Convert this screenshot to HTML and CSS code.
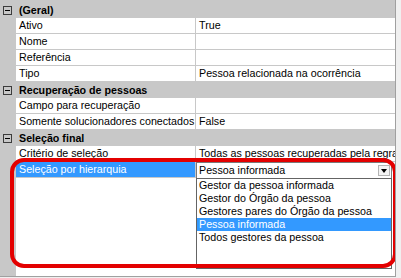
FILE: index.html
```html
<!DOCTYPE html>
<html lang="pt">
<head>
    <meta charset="UTF-8">
    <title>Propriedades</title>
    <link rel="stylesheet" href="styles.css">
</head>
<body>
    <div class="grid">
        <div class="cat"><span class="toggle"></span>(Geral)</div>
        <div class="row"><div class="margin"></div><div class="name">Ativo</div><div class="value">True</div></div>
        <div class="row"><div class="margin"></div><div class="name">Nome</div><div class="value"></div></div>
        <div class="row"><div class="margin"></div><div class="name">Referência</div><div class="value"></div></div>
        <div class="row"><div class="margin"></div><div class="name">Tipo</div><div class="value">Pessoa relacionada na ocorrência</div></div>

        <div class="cat"><span class="toggle"></span>Recuperação de pessoas</div>
        <div class="row"><div class="margin"></div><div class="name">Campo para recuperação</div><div class="value"></div></div>
        <div class="row"><div class="margin"></div><div class="name">Somente solucionadores conectados</div><div class="value">False</div></div>

        <div class="cat"><span class="toggle"></span>Seleção final</div>
        <div class="row"><div class="margin"></div><div class="name">Critério de seleção</div><div class="value">Todas as pessoas recuperadas pela regra</div></div>
        <div class="row selected">
            <div class="margin"></div>
            <div class="name">Seleção por hierarquia</div>
            <div class="value">
                <div class="edit">Pessoa informada<span class="drop-button"></span></div>
            </div>
        </div>

        <div class="filler"><div class="margin"></div><div class="empty"></div></div>

        <!-- lista aberta do combo -->
        <div class="dropdown-list">
            <div class="item">Gestor da pessoa informada</div>
            <div class="item">Gestor do Órgão da pessoa</div>
            <div class="item">Gestores pares do Órgão da pessoa</div>
            <div class="item active">Pessoa informada</div>
            <div class="item">Todos gestores da pessoa</div>
        </div>

        <!-- marcação vermelha -->
        <div class="highlight"></div>
    </div>
</body>
</html>
```

FILE: styles.css
```css
body
{
    margin: 0;
    background-color: #f0f0f0;
    font-family: "Liberation Sans", Arial, sans-serif;
    font-size: 10.7px;
    color: #000;
}

.grid
{
    position: relative;
    width: 396px;
    height: 277px;
    box-sizing: border-box;
    padding-top: 2px;
    border-right: 1px solid #a0a0a0;
    border-bottom: 1px solid #a0a0a0;
    background-color: #c8c8c8;
    display: flex;
    flex-direction: column;
    overflow: hidden;
}

.cat
{
    height: 16px;
    flex: none;
    display: flex;
    align-items: center;
    padding-left: 3px;
    font-weight: bold;
    white-space: nowrap;
}

.toggle
{
    position: relative;
    width: 9px;
    height: 9px;
    box-sizing: border-box;
    border: 1px solid #3c3c3c;
    margin-right: 7px;
}

.toggle::after
{
    content: "";
    position: absolute;
    left: 1px;
    top: 3px;
    width: 5px;
    height: 1px;
    background-color: #000;
}

.row
{
    height: 16px;
    flex: none;
    display: grid;
    grid-template-columns: 16px 180px 1fr;
    line-height: 15px;
    white-space: nowrap;
}

.name
{
    background-color: #fff;
    border-right: 1px solid #c8c8c8;
    border-bottom: 1px solid #c8c8c8;
    padding-left: 3px;
    overflow: hidden;
}

.value
{
    background-color: #fff;
    border-bottom: 1px solid #c8c8c8;
    padding-left: 3px;
    overflow: hidden;
}

.selected .name
{
    background-color: #3399ff;
    color: #fff;
}

.selected .value
{
    padding-left: 0;
    border-bottom: none;
}

.edit
{
    width: 196px;
    height: 16px;
    box-sizing: border-box;
    border: 1px solid #7a7a7a;
    border-bottom: none;
    padding-left: 2px;
    display: flex;
    align-items: center;
}

.drop-button
{
    position: relative;
    margin-left: auto;
    margin-right: 1px;
    width: 12px;
    height: 11px;
    box-sizing: border-box;
    border: 1px solid #b4b4b4;
    background-color: #f4f4f4;
}

.drop-button::after
{
    content: "";
    position: absolute;
    left: 2px;
    top: 3px;
    border-left: 3px solid transparent;
    border-right: 3px solid transparent;
    border-top: 4px solid #000;
}

.filler
{
    flex: 1;
    display: grid;
    grid-template-columns: 16px 1fr;
}

.empty
{
    background-color: #fff;
}

.dropdown-list
{
    position: absolute;
    left: 196px;
    top: 178px;
    width: 196px;
    height: 91px;
    box-sizing: border-box;
    border: 1px solid #646464;
    background-color: #fff;
}

.item
{
    height: 13px;
    line-height: 13px;
    padding-left: 2px;
    white-space: nowrap;
}

.item.active
{
    background-color: #3399ff;
    color: #fff;
}

.highlight
{
    position: absolute;
    left: 10px;
    top: 158px;
    width: 387px;
    height: 110px;
    box-sizing: border-box;
    border: 4px solid #e30000;
    border-radius: 14px;
    pointer-events: none;
}
```
